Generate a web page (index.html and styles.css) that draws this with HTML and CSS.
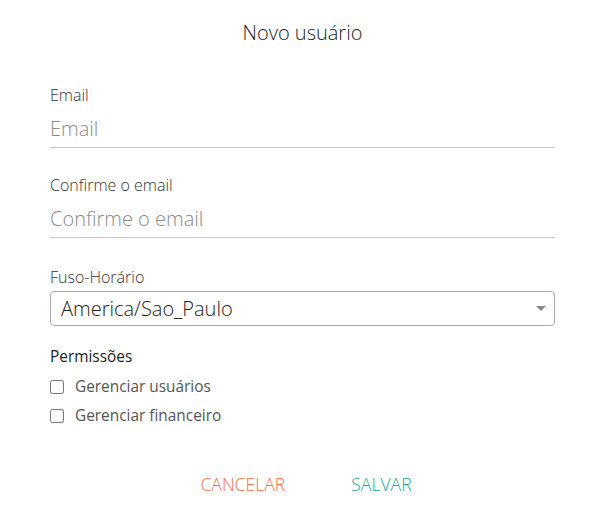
FILE: index.html
```html
<!DOCTYPE html>
<html lang="pt-BR">

<head>
    <meta charset="UTF-8">
    <meta name="viewport" content="width=device-width, initial-scale=1.0">
    <title>Novo usuário</title>
    <link rel="stylesheet" href="styles.css">
</head>

<body>

    <div class="modal">
        <h1 class="titulo">Novo usuário</h1>

        <form class="formulario">
            <div class="campo">
                <label for="email">Email</label>
                <input id="email" type="email" placeholder="Email">
            </div>

            <div class="campo">
                <label for="email2">Confirme o email</label>
                <input id="email2" type="email" placeholder="Confirme o email">
            </div>

            <div class="campo campo-select">
                <label for="fuso">Fuso-Horário</label>
                <div class="select">
                    <span>America/Sao_Paulo</span>
                    <span class="seta"></span>
                </div>
            </div>

            <div class="permissoes">
                <p class="permissoes-titulo">Permissões</p>
                <label class="check"><input type="checkbox"> Gerenciar usuários</label>
                <label class="check"><input type="checkbox"> Gerenciar financeiro</label>
            </div>

            <div class="acoes">
                <button type="button" class="cancelar">CANCELAR</button>
                <button type="button" class="salvar">SALVAR</button>
            </div>
        </form>
    </div>

</body>

</html>
```

FILE: styles.css
```css
body {
    margin: 0;
    background: white;
    font-family: "Open Sans", sans-serif;
    color: #333;
}

.modal {
    padding: 19px 49px 0 50px;
}

.titulo {
    margin: 0;
    font-size: 20px;
    font-weight: 300;
    text-align: center;
    line-height: 28px;
    color: #222;
}

.formulario {
    margin-top: 37px;
}

.campo {
    display: flex;
    flex-direction: column;
    margin-bottom: 26px;
}

.campo label {
    font-size: 16px;
    font-weight: 300;
    color: #333;
    line-height: 22px;
}

.campo input {
    border: 0;
    border-bottom: 1px solid #c8c8c8;
    padding: 9px 0 5px;
    font-family: inherit;
    font-size: 20px;
    font-weight: 300;
    line-height: 27px;
    outline: none;
}

.campo input::placeholder {
    color: #8a8a8a;
}

.campo-select {
    padding-top: 2px;
    margin-bottom: 20px;
}

.campo-select label {
    margin-bottom: 3px;
}

.select {
    display: flex;
    align-items: center;
    justify-content: space-between;
    height: 33px;
    border: 1px solid #aaa;
    border-radius: 4px;
    padding: 0 10px;
    font-size: 20px;
    font-weight: 300;
    color: #222;
}

.seta {
    width: 0;
    height: 0;
    border-left: 5px solid transparent;
    border-right: 5px solid transparent;
    border-top: 5px solid #888;
    margin-right: -2px;
}

.permissoes {
    display: flex;
    flex-direction: column;
}

.permissoes-titulo {
    margin: 0 0 8px;
    font-size: 15.4px;
    font-weight: 400;
    color: #222;
    line-height: 22px;
}

.check {
    display: flex;
    align-items: center;
    gap: 11px;
    font-size: 15.4px;
    color: #555;
    line-height: 22px;
    margin-bottom: 7px;
}

.check input {
    margin: 0;
    width: 14px;
    height: 14px;
}

.acoes {
    display: flex;
    justify-content: center;
    gap: 50px;
    margin-top: 32px;
    padding-left: 7px;
}

.acoes button {
    background: none;
    border: 0;
    font-family: inherit;
    font-size: 17.6px;
    font-weight: 300;
    line-height: 24px;
    padding: 6px 8px;
}

.cancelar {
    color: #ff6e40;
}

.salvar {
    color: #26a69a;
}
```
